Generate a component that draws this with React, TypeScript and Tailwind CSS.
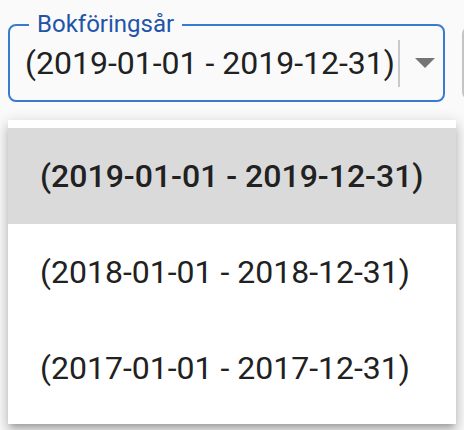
import React from "react";

const years = [
  "(2019-01-01 - 2019-12-31)",
  "(2018-01-01 - 2018-12-31)",
  "(2017-01-01 - 2017-12-31)",
];

export default function App() {
  const selected = 0;

  return (
    <div
      className="relative w-[464px] h-[430px] overflow-hidden bg-[#fafafa] text-[#212121]"
      style={{ fontFamily: "Roboto, 'Liberation Sans', sans-serif" }}
    >
      {/* select field + the next field peeking in on the right */}
      <div className="flex gap-[17px] pt-[24px] pl-[8px]">
        <div className="relative flex items-center shrink-0 w-[437px] h-[78px] border-2 border-[#3a7bd0] rounded-lg pl-[15px]">
          <span className="absolute -top-[17px] left-[19px] px-[8px] bg-[#fafafa] text-[24px] leading-[30px] text-[#1f55a8]">
            Bokföringsår
          </span>
          <span className="text-[32px] leading-none whitespace-nowrap">{years[selected]}</span>
          <div className="ml-[3px] w-[2px] h-[47px] bg-[#c9c9c9]" />
          {/* arrow drop down */}
          <svg className="ml-[15px]" width="20" height="10" viewBox="0 0 20 10">
            <path d="M0 0l10 10 10-10z" fill="#757575" />
          </svg>
        </div>
        <div className="shrink-0 w-[200px] h-[74px] mt-[2px] border-2 border-[#c4c4c4] rounded-lg" />
      </div>

      {/* open menu */}
      <ul className="absolute top-[120px] left-[8px] w-[448px] py-[8px] bg-white shadow-[0_5px_5px_-3px_rgba(0,0,0,0.2),0_8px_10px_1px_rgba(0,0,0,0.14),0_3px_14px_2px_rgba(0,0,0,0.12)]">
        {years.map((y, i) => (
          <li
            key={y}
            className={
              i === selected
                ? "flex items-center h-[96px] px-[32px] bg-[#dadada] text-[32px] font-medium whitespace-nowrap"
                : "flex items-center h-[96px] px-[32px] text-[32px] whitespace-nowrap"
            }
          >
            {y}
          </li>
        ))}
      </ul>
    </div>
  );
}
